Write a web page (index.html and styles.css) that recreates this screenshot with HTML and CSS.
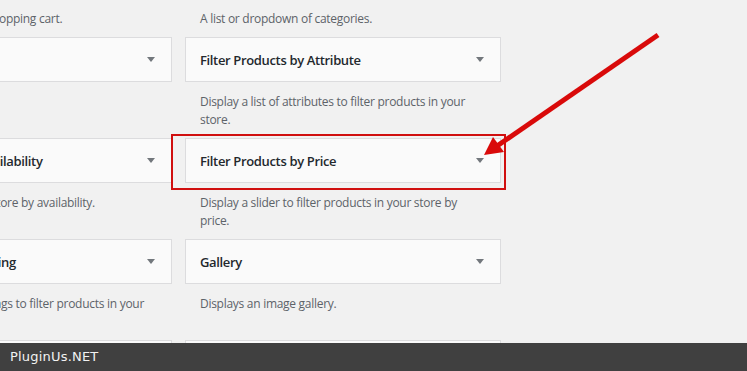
FILE: index.html
```html
<!DOCTYPE html>
<html lang="en">

<head>
    <meta charset="UTF-8">
    <meta name="viewport" content="width=device-width, initial-scale=1.0">
    <title>Available Widgets</title>
    <link rel="stylesheet" href="styles.css">
</head>

<body>
    <div class="screen">
        <div class="widget-area">
            <div class="widget-list">
                <!-- tail of the previous row, scrolled out of view -->
                <div class="widget">
                    <div class="widget-description">Display the customer shopping cart.</div>
                </div>
                <div class="widget">
                    <div class="widget-description">A list or dropdown of categories.</div>
                </div>

                <div class="widget">
                    <div class="widget-top">
                        <h3 class="widget-title">Custom HTML</h3>
                        <span class="widget-toggle"></span>
                    </div>
                    <div class="widget-description">Arbitrary HTML code.</div>
                </div>
                <div class="widget">
                    <div class="widget-top">
                        <h3 class="widget-title">Filter Products by Attribute</h3>
                        <span class="widget-toggle"></span>
                    </div>
                    <div class="widget-description">Display a list of attributes to filter products in your store.</div>
                </div>

                <div class="widget">
                    <div class="widget-top">
                        <h3 class="widget-title">Filter Products by Availability</h3>
                        <span class="widget-toggle"></span>
                    </div>
                    <div class="widget-description">Filter products in your store by availability.</div>
                </div>
                <div class="widget">
                    <div class="widget-top">
                        <h3 class="widget-title">Filter Products by Price</h3>
                        <span class="widget-toggle"></span>
                    </div>
                    <div class="widget-description">Display a slider to filter products in your store by price.</div>
                </div>

                <div class="widget">
                    <div class="widget-top">
                        <h3 class="widget-title">Filter Products by Rating</h3>
                        <span class="widget-toggle"></span>
                    </div>
                    <div class="widget-description">Display a list of star ratings to filter products in your store.</div>
                </div>
                <div class="widget">
                    <div class="widget-top">
                        <h3 class="widget-title">Gallery</h3>
                        <span class="widget-toggle"></span>
                    </div>
                    <div class="widget-description">Displays an image gallery.</div>
                </div>

                <div class="widget">
                    <div class="widget-top">
                        <h3 class="widget-title">Image</h3>
                        <span class="widget-toggle"></span>
                    </div>
                    <div class="widget-description">Displays an image.</div>
                </div>
                <div class="widget">
                    <div class="widget-top">
                        <h3 class="widget-title">Meta</h3>
                        <span class="widget-toggle"></span>
                    </div>
                    <div class="widget-description">Login, RSS, &amp; WordPress.org links.</div>
                </div>
            </div>

            <!-- annotation drawn over the screenshot -->
            <div class="callout"></div>
            <svg class="pointer" width="747" height="200" viewBox="0 0 747 200">
                <line x1="658" y1="35" x2="497" y2="146" stroke="#d90a0a" stroke-width="5" />
                <polygon points="484,155 493,137 504,152" fill="#d90a0a" />
            </svg>
        </div>

        <footer class="watermark">PluginUs.NET</footer>
    </div>
</body>

</html>
```

FILE: styles.css
```css
:root {
    --page-bg: #f1f1f1;
    --card-bg: #fafafa;
    --card-border: #dcdcde;
    --title-color: #23282d;
    --text-color: #5d6369;
    --toggle-color: #72777c;
    --mark-red: #d00f0f;
    --ui-font: 'Open Sans', 'Noto Sans', sans-serif;
}

html,
body {
    margin: 0;
    padding: 0;
}

body {
    background: var(--page-bg);
    font-family: var(--ui-font);
    font-size: 12px;
    overflow: hidden;
}

.screen {
    display: flex;
    flex-direction: column;
    height: 371px;
}

.widget-area {
    position: relative;
    flex: 1;
    overflow: hidden;
}

.widget-list {
    display: grid;
    grid-template-columns: 316px 316px;
    column-gap: 13px;
    margin: 0 0 0 -144px;
}

.widget-top {
    display: flex;
    align-items: center;
    justify-content: space-between;
    height: 43px;
    padding: 0 16px 0 14px;
    background: var(--card-bg);
    border: 1px solid var(--card-border);
}

.widget-title {
    margin: 0;
    padding-top: 1px;
    font-size: 13px;
    font-weight: 600;
    letter-spacing: -0.35px;
    color: var(--title-color);
    white-space: nowrap;
}

.widget-toggle {
    width: 0;
    height: 0;
    border-left: 4px solid transparent;
    border-right: 4px solid transparent;
    border-top: 5px solid var(--toggle-color);
}

.widget-description {
    padding: 11px 15px 9px 15px;
    line-height: 18px;
    letter-spacing: -0.28px;
    color: var(--text-color);
}

.widget:nth-child(-n+2) .widget-description {
    padding-top: 10px;
}

.callout {
    position: absolute;
    left: 171px;
    top: 134px;
    width: 331px;
    height: 52px;
    border: 2px solid var(--mark-red);
}

.pointer {
    position: absolute;
    left: 0;
    top: 0;
}

.watermark {
    height: 28px;
    padding-left: 10px;
    background: #404040;
    color: #f2f2f2;
    font-family: 'DejaVu Sans', sans-serif;
    font-size: 13px;
    line-height: 28px;
    letter-spacing: 0.2px;
}
```
